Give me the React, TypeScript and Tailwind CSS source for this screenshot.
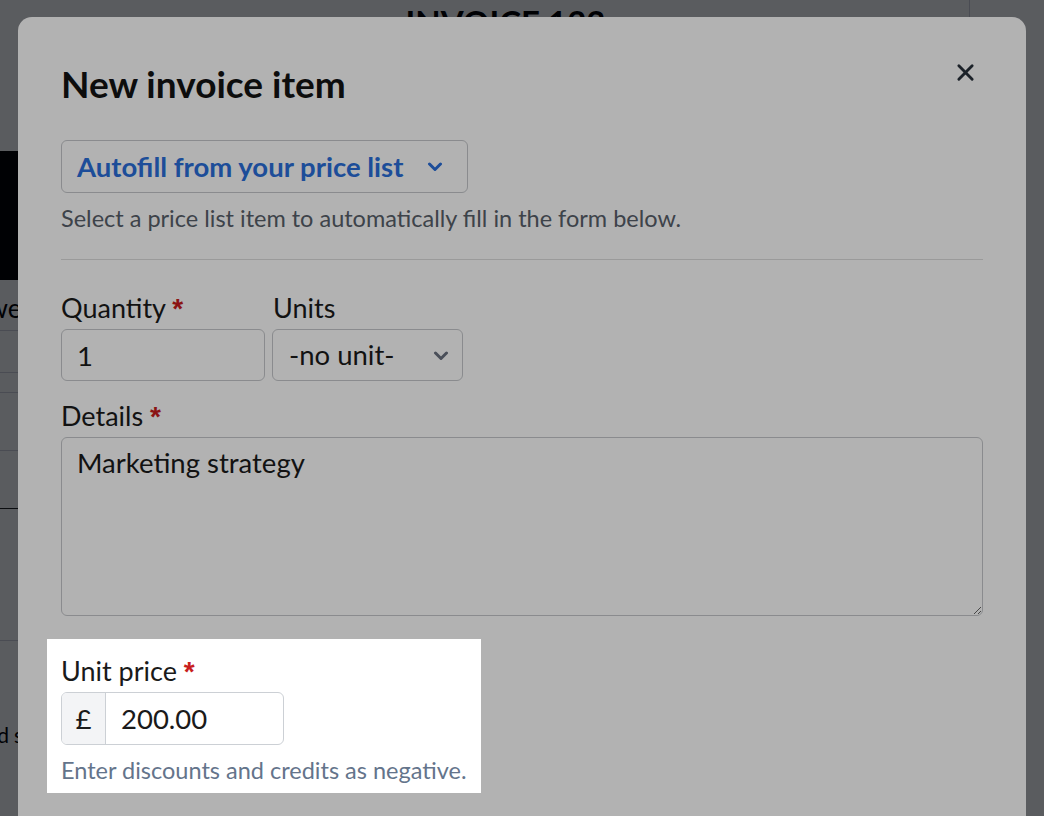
import { useState } from "react"

function Chevron({ className }: { className?: string }) {
  return (
    <svg viewBox="0 0 16 10" className={className} fill="none" stroke="currentColor" strokeWidth="3" strokeLinecap="round" strokeLinejoin="round">
      <path d="M2.5 2l5.5 5.5L13.5 2" />
    </svg>
  )
}

function Required() {
  return <span className="font-[family-name:'Liberation_Sans',sans-serif] text-[28px] font-bold text-[#c81e1e]">*</span>
}

export default function App() {
  const [quantity, setQuantity] = useState("1")
  const [unit, setUnit] = useState("")
  const [details, setDetails] = useState("Marketing strategy")
  const [price, setPrice] = useState("200.00")

  return (
    <div className="relative h-[816px] w-full overflow-hidden bg-white font-[family-name:Lato,sans-serif]">
      {/* invoice page behind the modal */}
      <div className="flex h-full">
        <div className="w-[970px] shrink-0 border-r border-gray-300">
          <h1 className="pl-[42px] pt-[2px] text-center text-[33px] font-bold leading-[40px] text-black">INVOICE 123</h1>
          <div className="-ml-[100px] mt-[109px] w-[700px]">
            <div className="h-[129px] bg-black" />
            <div className="h-[51px] border-b border-gray-300 pt-[5px]">
              <div className="whitespace-nowrap pl-[58px] text-[26px] leading-[46px] text-black">Powered by</div>
            </div>
            <div className="h-[42px] border-b border-gray-300" />
            <div className="h-[20px] border-b border-gray-300" />
            <div className="h-[58px] border-b border-gray-300" />
            <div className="h-[58px] border-b border-[#222]" />
            <div className="h-[132px] border-b border-gray-300" />
            <div className="mt-[82px] flex whitespace-nowrap text-[21px] leading-[24px] text-black">
              <span className="w-[109px] text-right">Card</span>
              <span className="ml-[5px]">statement</span>
            </div>
          </div>
        </div>
      </div>

      <div className="absolute inset-0 bg-[rgba(0,4,15,0.49)]" />

      {/* modal */}
      <div className="absolute left-[18px] top-[17px] w-[1008px] rounded-[14px] bg-white px-[43px] pb-[80px] pt-[45px]">
        <div className="flex items-start justify-between">
          <h2 className="text-[37px] font-bold leading-[44px] text-[#141414]">New invoice item</h2>
          <button className="-mt-[8px] flex h-[36px] w-[36px] items-center justify-center text-[#29313b]">
            <svg viewBox="0 0 20 20" className="h-[19px] w-[19px]" fill="none" stroke="currentColor" strokeWidth="3" strokeLinecap="round">
              <path d="M3 3l14 14M17 3L3 17" />
            </svg>
          </button>
        </div>

        <button className="mt-[34px] flex h-[53px] w-[407px] items-center gap-[24px] rounded-[6px] border border-[#c6c8cc] pl-[15px] text-[27.5px] font-bold leading-none text-[#2a6fdb]">
          Autofill from your price list
          <Chevron className="h-[10px] w-[16px]" />
        </button>
        <p className="mt-[10px] text-[23.5px] leading-[30px] text-[#58606a]">
          Select a price list item to automatically fill in the form below.
        </p>

        <hr className="mt-[26px] border-t border-[#dddddd]" />

        <div className="mt-[32px] flex gap-[7px]">
          <div className="w-[204px]">
            <label htmlFor="qty" className="mb-[5px] block h-[32px] text-[27px] leading-[32px] text-[#1a1a1a]">
              Quantity <Required />
            </label>
            <input
              id="qty"
              value={quantity}
              onChange={(e) => setQuantity(e.target.value)}
              className="h-[52px] w-full rounded-[6px] border border-[#c6c8cc] pl-[15px] text-[27.5px] text-[#1a1a1a] outline-none"
            />
          </div>
          <div className="w-[191px]">
            <label htmlFor="unit" className="mb-[5px] block h-[32px] pl-[1px] text-[27px] leading-[32px] text-[#1a1a1a]">
              Units
            </label>
            <div className="relative">
              <select
                id="unit"
                value={unit}
                onChange={(e) => setUnit(e.target.value)}
                className="h-[52px] w-full appearance-none rounded-[6px] border border-[#c6c8cc] bg-white pl-[16px] text-[27.5px] text-[#1a1a1a] outline-none"
              >
                <option value="">-no unit-</option>
                <option value="hours">hours</option>
                <option value="days">days</option>
              </select>
              <Chevron className="pointer-events-none absolute right-[14px] top-[22px] h-[10px] w-[16px] text-[#6b7280]" />
            </div>
          </div>
        </div>

        <label htmlFor="details" className="mb-[5px] mt-[19px] block h-[32px] text-[27px] leading-[32px] text-[#1a1a1a]">
          Details <Required />
        </label>
        <textarea
          id="details"
          value={details}
          onChange={(e) => setDetails(e.target.value)}
          className="block h-[179px] w-full rounded-[6px] border border-[#c6c8cc] px-[15px] pt-[8px] text-[27.5px] leading-[34px] text-[#1a1a1a] outline-none"
        />

        {/* highlighted field */}
        <div className="relative z-10 -mx-[14px] mt-[23px] w-[434px] bg-white px-[14px] pb-[8px] pt-[16px] shadow-[0_0_0_9999px_rgba(0,0,0,0.3)]">
          <label htmlFor="price" className="mb-[5px] block h-[32px] text-[27px] leading-[32px] text-[#1a1a1a]">
            Unit price <Required />
          </label>
          <div className="flex h-[53px] w-[223px] overflow-hidden rounded-[6px] border border-[#ccd0d5]">
            <span className="flex w-[44px] items-center justify-center border-r border-[#ccd0d5] bg-[#f3f4f6] text-[27.5px] text-[#1a1a1a]">£</span>
            <input
              id="price"
              value={price}
              onChange={(e) => setPrice(e.target.value)}
              className="min-w-0 flex-1 pl-[15px] text-[27.5px] text-[#1a1a1a] outline-none"
            />
          </div>
          <p className="mt-[10px] whitespace-nowrap text-[23.5px] leading-[30px] text-[#64748b]">Enter discounts and credits as negative.</p>
        </div>
      </div>
    </div>
  )
}
